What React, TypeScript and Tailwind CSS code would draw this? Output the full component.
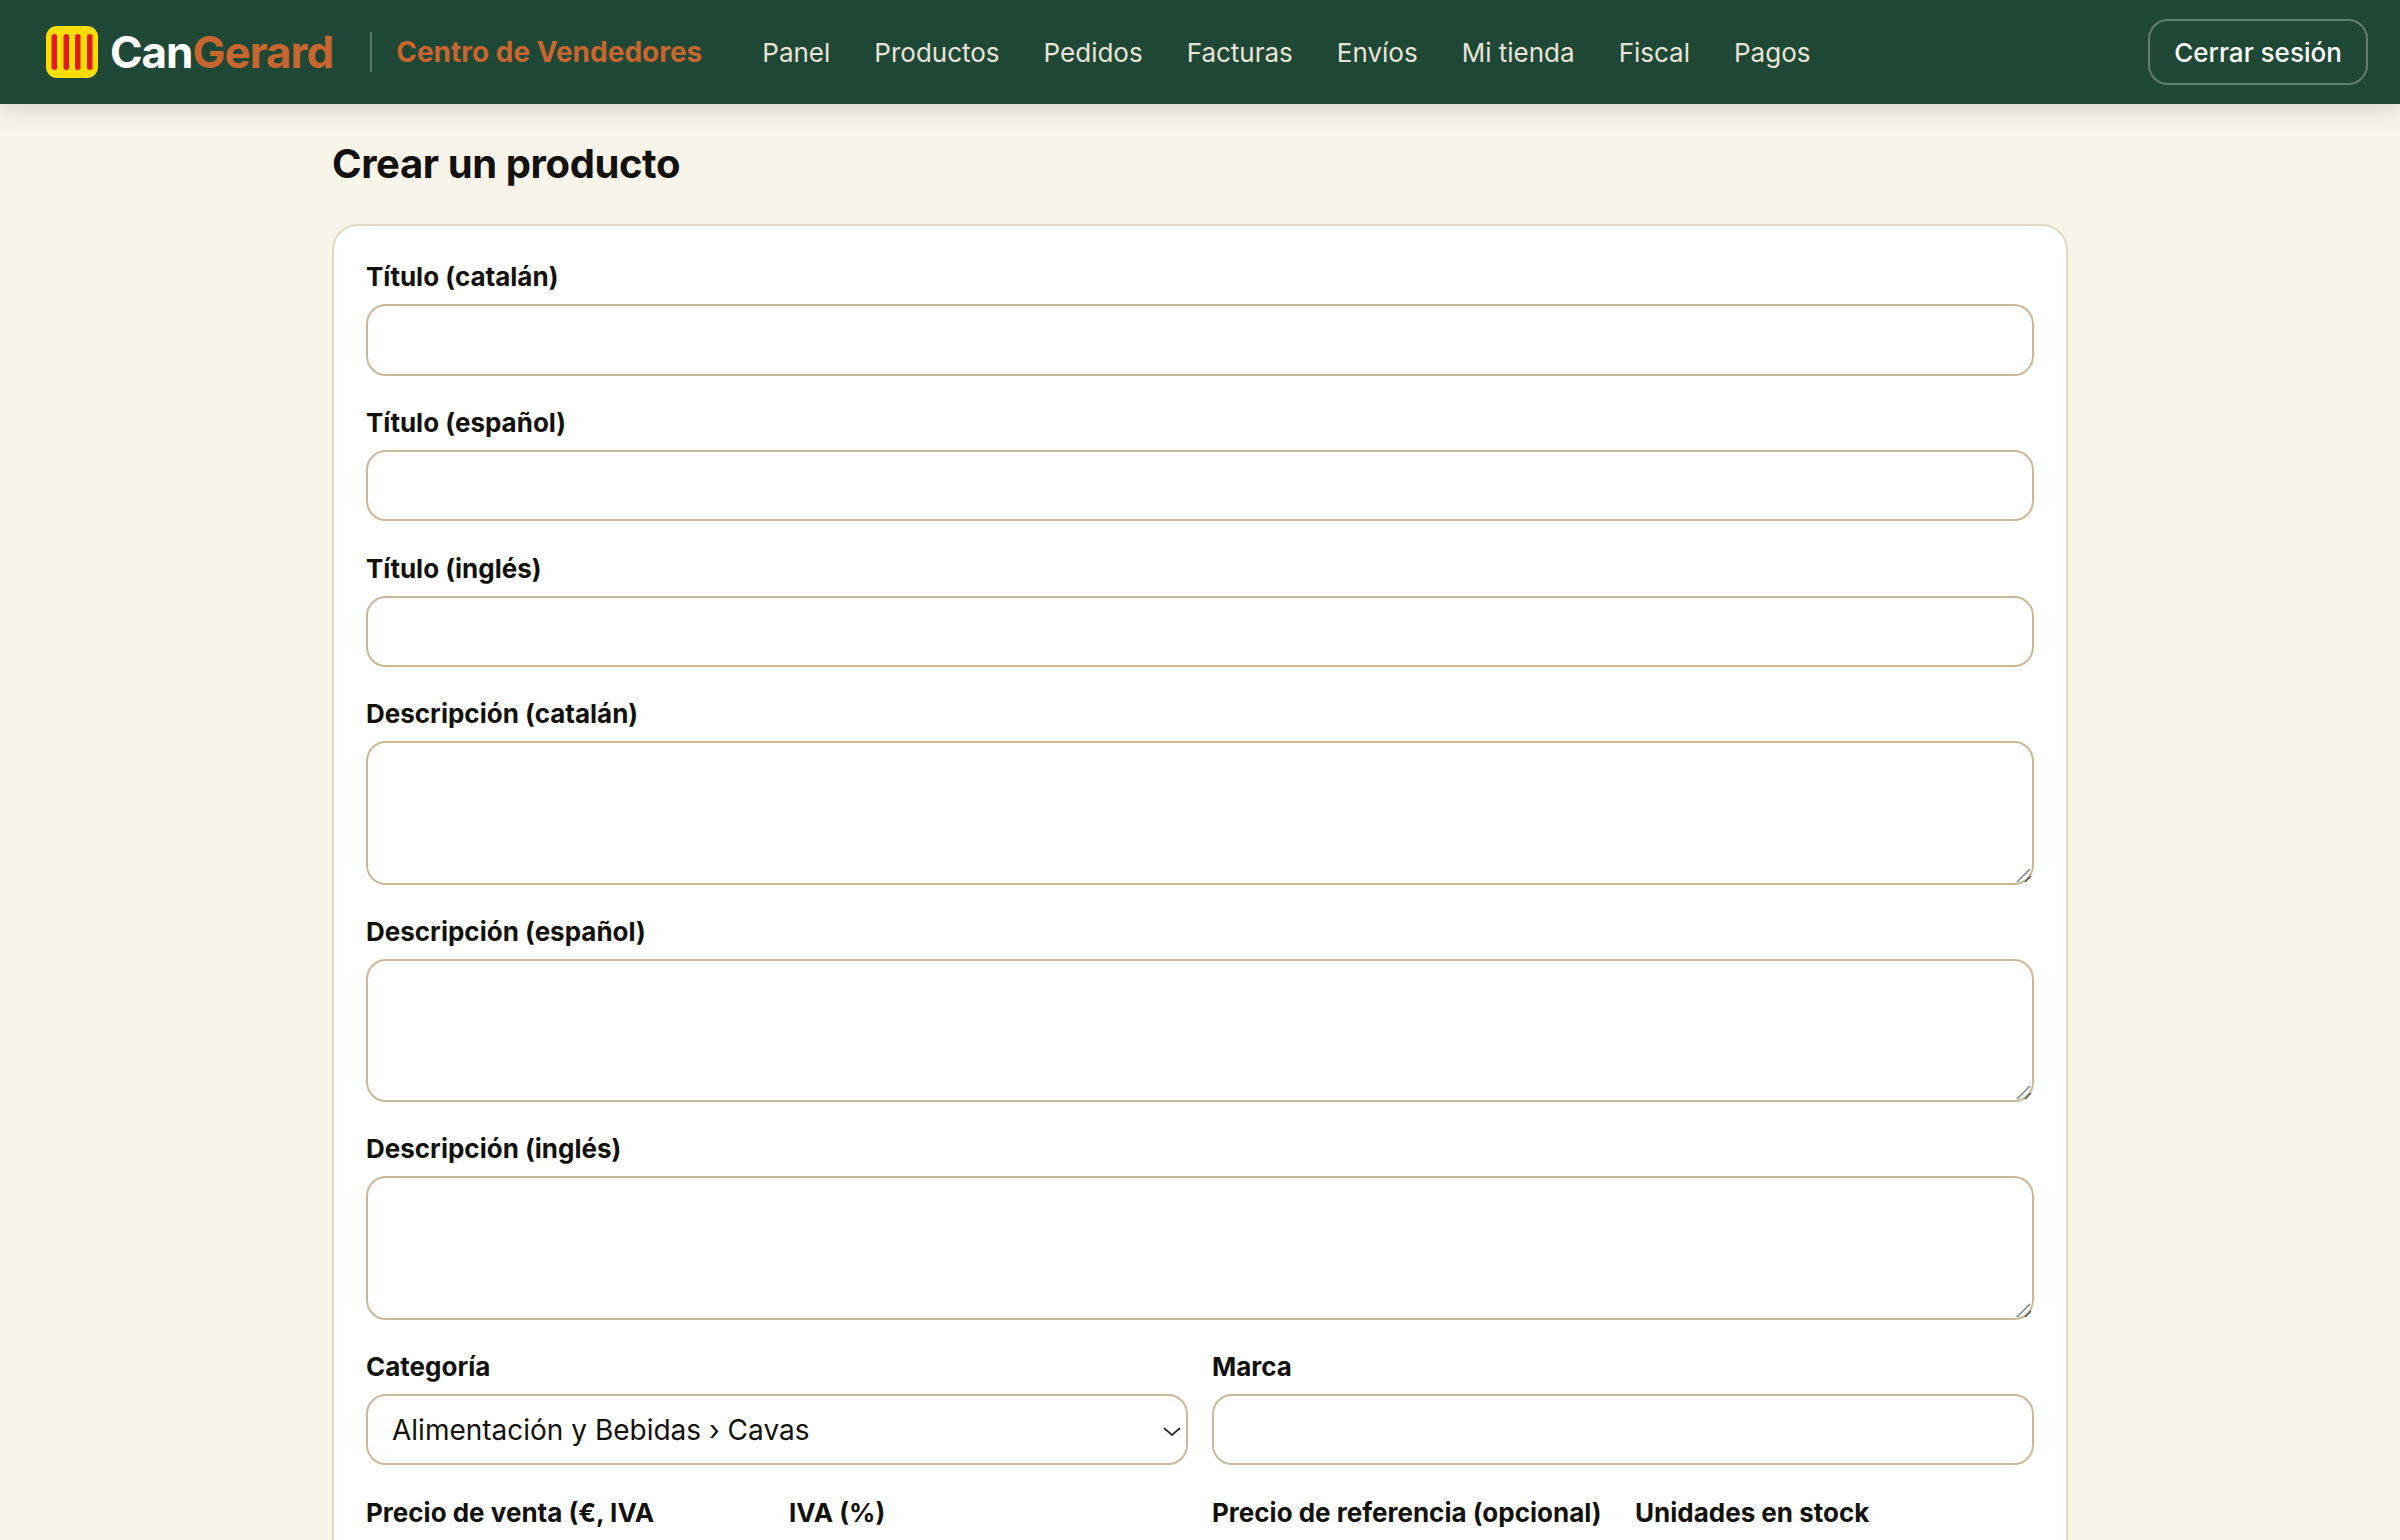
import React from "react";

const navLinks = ["Panel", "Productos", "Pedidos", "Facturas", "Envíos", "Mi tienda", "Fiscal", "Pagos"];

const inputClass =
  "block h-[71.5px] w-full rounded-[20px] border-2 border-[#c8b99a] bg-white px-6 text-[28px] text-[#12110d] outline-none";
const areaClass =
  "block h-[143.25px] w-full resize-none rounded-[20px] border-2 border-[#c8b99a] bg-white px-6 py-4 text-[28px] text-[#12110d] outline-none";
const labelClass = "mb-2 block text-[26px] leading-[39px] font-bold text-[#12110d]";

const Logo = () => (
  <svg viewBox="0 0 52 52" className="h-[52px] w-[52px] shrink-0">
    <rect width="52" height="52" rx="11" fill="#ffdd00" />
    <rect x="5.5" y="8" width="5.5" height="36" rx="2.75" fill="#e01c1c" />
    <rect x="17.5" y="8" width="5.5" height="36" rx="2.75" fill="#e01c1c" />
    <rect x="29" y="8" width="5.5" height="36" rx="2.75" fill="#e01c1c" />
    <rect x="41" y="8" width="5.5" height="36" rx="2.75" fill="#e01c1c" />
  </svg>
);

const Header = () => (
  <header className="relative z-10 flex h-[104px] items-center justify-between bg-[#204836] pr-8 pl-[46px] shadow-[0_4px_24px_rgba(0,0,0,0.15)]">
    <div className="flex items-center">
      <Logo />
      <span className="ml-3 text-[44px] leading-none font-bold tracking-[-1px] text-white">
        Can<span className="text-[#c8662f]">Gerard</span>
      </span>
      <div className="mr-6 ml-[37px] h-10 w-0.5 bg-white/25" />
      <span className="text-[28px] font-bold text-[#c8662f]">Centro de Vendedores</span>
      <nav className="ml-[60px] flex gap-11">
        {navLinks.map((link) => (
          <a key={link} className="text-[26px] text-[#e9e4d8]">
            {link}
          </a>
        ))}
      </nav>
    </div>
    <button className="h-[66px] w-[220px] rounded-[20px] border-2 border-white/30 text-[26px] font-medium text-white">
      Cerrar sesión
    </button>
  </header>
);

const Grip = () => (
  <svg viewBox="0 0 16 16" className="absolute right-[2px] bottom-[2px] h-4 w-4">
    <path d="M1 15 14 2" stroke="#76857e" strokeWidth="1.5" />
    <path d="M9 15l6-6" stroke="#4b4f4a" strokeWidth="1.5" />
  </svg>
);

const Field = ({ label, area }: { label: string; area?: boolean }) => (
  <div>
    <label className={labelClass}>{label}</label>
    {area ? (
      <div className="relative">
        <textarea className={areaClass} />
        <Grip />
      </div>
    ) : (
      <input type="text" className={inputClass} />
    )}
  </div>
);

export default function App() {
  return (
    <div className="h-screen overflow-hidden bg-[#f8f4ea] font-['Inter',sans-serif]">
      <Header />
      <main className="mx-auto w-[1736px] pt-[38px]">
        <h1 className="text-[40px] leading-[44px] font-bold tracking-[-0.4px] text-[#12110d]">Crear un producto</h1>
        <form className="mt-[38px] rounded-[26px] border-2 border-[#e2d9c5] bg-white px-8 pt-[31px] pb-8">
          <div className="flex flex-col gap-[27.25px]">
            <Field label="Título (catalán)" />
            <Field label="Título (español)" />
            <Field label="Título (inglés)" />
            <Field label="Descripción (catalán)" area />
            <Field label="Descripción (español)" area />
            <Field label="Descripción (inglés)" area />
            <div className="grid grid-cols-2 gap-6">
              <div>
                <label className={labelClass}>Categoría</label>
                <div className="relative">
                  <select className={`${inputClass} appearance-none`}>
                    <option>Alimentación y Bebidas › Cavas</option>
                  </select>
                  <svg viewBox="0 0 18 9" fill="none" className="absolute top-[33px] right-[7px] h-[9px] w-[18px]">
                    <path d="M1 1l8 7 8-7" stroke="#2b2b28" strokeWidth="1.8" />
                  </svg>
                </div>
              </div>
              <Field label="Marca" />
            </div>
            <div className="grid grid-cols-4 gap-6">
              <Field label="Precio de venta (€, IVA incluido)" />
              <Field label="IVA (%)" />
              <Field label="Precio de referencia (opcional)" />
              <Field label="Unidades en stock" />
            </div>
          </div>
        </form>
      </main>
    </div>
  );
}
